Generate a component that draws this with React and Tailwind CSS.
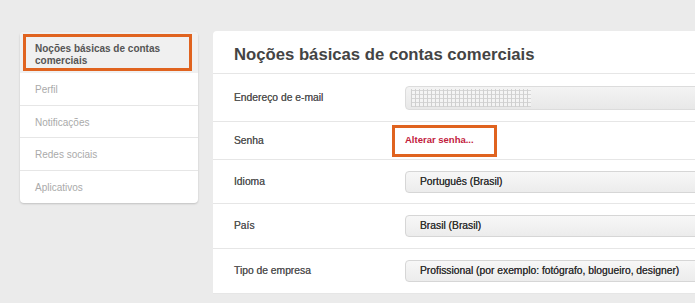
import React from 'react';

const menu = ['Perfil', 'Notificações', 'Redes sociais', 'Aplicativos'];

const Select = ({ children }) => (
  <div className="h-[22px] w-full rounded-[4px] border border-[#d6d6d6] bg-gradient-to-b from-[#f7f7f7] to-[#ececec] pl-[14px] flex items-center text-[10.3px] text-[#333] [text-shadow:0_0_0.4px_#333]">
    {children}
  </div>
);

const Row = ({ label, h, children }) => (
  <div className={`flex items-center border-b border-[#e6e6e6] pl-[21px] ${h}`}>
    <div className="w-[171px] shrink-0 text-[10.3px] text-[#555] [text-shadow:0_0_0.5px_#555]">{label}</div>
    <div className="flex-1">{children}</div>
  </div>
);

export default function App() {
  return (
    <div className="h-[303px] w-[695px] overflow-hidden bg-[#ebebeb] flex items-start" style={{ fontFamily: '"Liberation Sans", Arial, sans-serif' }}>
      <div className="ml-[20px] mt-[32px] w-[178px] shrink-0 rounded-[4px] bg-white shadow-[0_1px_2px_rgba(0,0,0,0.18)]">
        <div className="h-[41px] rounded-t-[4px] bg-[#f0f0f0] px-[3px] pt-[2px]">
          <div className="h-[37px] w-[169px] border-[3px] border-[#e0631f] pl-[9px] pt-[6px] text-[10px] font-bold leading-[12px] text-[#555]">
            Noções básicas de contas comerciais
          </div>
        </div>
        {menu.map((m, i) => (
          <div key={m} className={`h-[32.5px] flex items-center pl-[15px] pt-[2px] text-[10px] text-[#aaa] ${i < menu.length - 1 ? 'border-b border-[#e6e6e6]' : ''}`}>
            {m}
          </div>
        ))}
      </div>

      <div className="ml-[15px] mt-[31px] w-[520px] shrink-0 rounded-tl-[4px] bg-white">
        <div className="h-[43px] border-b border-[#e6e6e6] pl-[21px] pt-[11px] text-[16.7px] font-bold text-[#444]">
          Noções básicas de contas comerciais
        </div>
        <Row label="Endereço de e-mail" h="h-[48px]">
          <div className="h-[24px] w-full rounded-[4px] border border-[#dcdcdc] bg-gradient-to-b from-[#f3f3f3] to-[#e8e8e8] flex items-center pl-[5px]">
            <div className="h-[18px] w-[120px] bg-[repeating-linear-gradient(90deg,#c9c9c9_0px,#c9c9c9_1px,transparent_1px,transparent_4px),repeating-linear-gradient(0deg,#d0d0d0_0px,#d0d0d0_1px,#f6f6f6_1px,#f6f6f6_4px)] opacity-80" />
          </div>
        </Row>
        <Row label="Senha" h="h-[38px]">
          <div className="-ml-[13px] h-[32px] w-[105px] border-[3px] border-[#e0631f] flex items-center pl-[10px] text-[9.5px] font-bold text-[#c2203c]">
            Alterar senha...
          </div>
        </Row>
        <Row label="Idioma" h="h-[44px]">
          <Select>Português (Brasil)</Select>
        </Row>
        <Row label="País" h="h-[45px]">
          <Select>Brasil (Brasil)</Select>
        </Row>
        <Row label="Tipo de empresa" h="h-[45px]">
          <Select>Profissional (por exemplo: fotógrafo, blogueiro, designer)</Select>
        </Row>
      </div>
    </div>
  );
}
